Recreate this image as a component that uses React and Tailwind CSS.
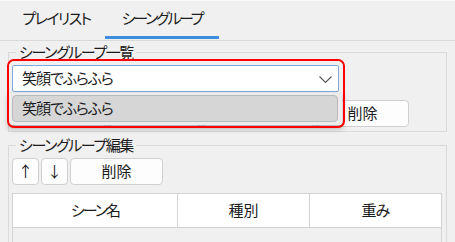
import React from "react";

const F = "[font-family:'Noto_Sans_CJK_JP','Noto_Sans',sans-serif] [font-feature-settings:'palt']";

function Btn({ className = "", children }) {
  return (
    <div
      className={`h-[27px] flex items-center justify-center rounded-[4px] border border-[#d0d0d0] bg-[#fdfdfd] text-[15px] text-[#1b1b1b] ${className}`}
    >
      {children}
    </div>
  );
}

export default function App() {
  return (
    <div className={`relative w-[455px] h-[242px] overflow-hidden bg-[#f0f0f0] text-[#1b1b1b] ${F}`}>
      {/* tabs */}
      <div className="h-[41px] border-b border-[#d9d9d9] flex pl-[8px] border-t border-t-[#fafafa]">
        <div className="w-[97px] flex items-center justify-center text-[15px] tracking-[-1.6px] pb-[4px]">プレイリスト</div>
        <div className="relative w-[114px] flex items-center justify-center text-[15px] tracking-[-2.3px] pb-[4px]">
          シーングループ
          <div className="absolute left-0 right-0 bottom-[1px] h-[3px] bg-[#3f8ddf]" />
        </div>
      </div>

      {/* group 1 */}
      <fieldset className="mx-[8px] mt-[1px] border border-[#dadada] px-[3px] pt-[3px] pb-[4px]">
        <legend className="ml-[4px] px-[3px] text-[15px] leading-[20px] tracking-[-1.4px]">シーングループ一覧</legend>
        <div className="h-[27px] w-[327px] bg-white border border-[#7ea9dd] rounded-[2px] flex items-center justify-between pl-[9px] pr-[6px] text-[15px]">
          <span className="tracking-[-1px]">笑顔でふらふら</span>
          <svg width="13" height="7" viewBox="0 0 13 7" className="mt-[1px]">
            <path d="M0.5 0.5 L6.5 6.5 L12.5 0.5" fill="none" stroke="#555" strokeWidth="1.1" />
          </svg>
        </div>
        <div className="mt-[8px] flex gap-[1px]">
          <Btn className="w-[95px]" />
          <Btn className="w-[93px]" />
          <Btn className="w-[113px]" />
          <Btn className="w-[93px]">削除</Btn>
        </div>
      </fieldset>

      {/* group 2 */}
      <fieldset className="mx-[8px] mt-[3px] border border-[#dadada] px-[3px] pt-[3px] pb-[4px] h-[200px]">
        <legend className="ml-[4px] px-[3px] text-[15px] leading-[20px] tracking-[-1.4px]">シーングループ編集</legend>
        <div className="flex gap-[2px]">
          <Btn className="w-[27px]">↑</Btn>
          <Btn className="w-[27px]">↓</Btn>
          <Btn className="w-[93px]">削除</Btn>
        </div>
        <div className="mt-[8px] w-[430px] border border-[#d3d3d3]">
          <div className="flex h-[33px] bg-white text-[15px]">
            <div className="w-[165px] flex items-center justify-center border-r border-[#d3d3d3] tracking-[-2px]">シーン名</div>
            <div className="w-[132px] flex items-center justify-center border-r border-[#d3d3d3]">種別</div>
            <div className="flex-1 flex items-center justify-center tracking-[-0.8px]">重み</div>
          </div>
          <div className="h-[60px] border-t border-[#d3d3d3] bg-[#f0f0f0]" />
        </div>
      </fieldset>

      {/* popup */}
      <div className="absolute left-[9px] top-[93px] w-[333px] h-[32px] bg-[#ececec] shadow-[0_3px_6px_rgba(0,0,0,0.35)]">
        <div className="absolute left-[3px] top-[2px] w-[326px] h-[27px] rounded-[4px] border border-[#b9b9b9] bg-[#d6d6d6] flex items-center pl-[9px] text-[15px] tracking-[-1px]">
          笑顔でふらふら
        </div>
      </div>

      {/* red highlight */}
      <div className="absolute left-[7px] top-[59px] w-[338px] h-[69px] rounded-[7px] border-2 border-[#ff0000]" />
    </div>
  );
}
